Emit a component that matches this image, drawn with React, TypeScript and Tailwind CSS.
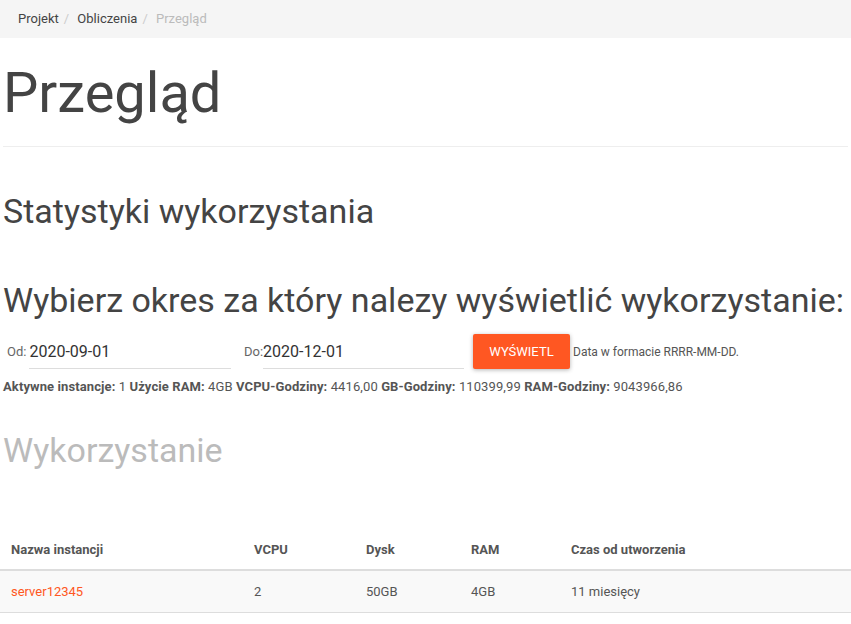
import React from "react";

export default function App() {
  const font = { fontFamily: "Roboto, 'Noto Sans', sans-serif" };
  return (
    <div style={font} className="w-[851px] min-h-[624px] bg-white text-[#444]">
      <div className="h-[38px] bg-[#f5f5f5] flex items-center pl-[18px] text-[13px]">
        <span className="text-[#444]">Projekt</span>
        <span className="px-[5px] text-[#ccc]">/{"\u00a0"}</span>
        <span className="text-[#444]">Obliczenia</span>
        <span className="px-[5px] text-[#ccc]">/{"\u00a0"}</span>
        <span className="text-[#bbb]">Przegląd</span>
      </div>
      <div className="px-[3px]">
        <h1 className="text-[56px] leading-[1.1] mt-[25px] pb-[21px] border-b border-[#eee] font-normal">Przegląd</h1>
        <h2 className="text-[34px] leading-[1.1] mt-[46px] font-normal">Statystyki wykorzystania</h2>
        <h2 className="text-[34px] leading-[1.1] mt-[52px] font-normal whitespace-nowrap">Wybierz okres za który nalezy wyświetlić wykorzystanie:</h2>
        <div className="flex items-start mt-[15px] h-[38px]">
          <div className="flex items-start pl-[4px] w-[229px]">
            <span className="text-[13px] text-[#666] mt-[8px] mr-[3px]">Od:</span>
            <div className="w-[202px] border-b border-[#ddd] h-[35px] pt-[6px] text-[16px] text-[#333]">2020-09-01</div>
          </div>
          <div className="flex items-start pl-[12px] w-[232px]">
            <span className="text-[13px] text-[#666] mt-[8px]">Do:</span>
            <div className="w-[202px] border-b border-[#ddd] h-[35px] pt-[6px] text-[16px] text-[#333]">2020-12-01</div>
          </div>
          <div className="ml-[9px] flex items-start">
            <button className="w-[97px] h-[35px] bg-[#ff5722] text-white text-[13px] rounded-[2px] shadow-[0_1px_4px_rgba(0,0,0,0.3)]">WYŚWIETL</button>
            <span className="text-[12px] text-[#555] ml-[3px] mt-[9px]">Data w formacie RRRR-MM-DD.</span>
          </div>
        </div>
        <div className="text-[13px] text-[#555] mt-[5px] whitespace-nowrap tracking-[0.1px]">
          <b>Aktywne instancje:</b> 1 <b>Użycie RAM:</b> 4GB <b>VCPU-Godziny:</b> 4416,00 <b>GB-Godziny:</b> 110399,99 <b>RAM-Godziny:</b> 9043966,86
        </div>
        <h2 className="text-[34px] leading-[1.1] mt-[35px] font-normal text-[#bbb]">Wykorzystanie</h2>
      </div>
      <table className="w-full mt-[62px] border-collapse">
        <thead>
          <tr className="border-b-2 border-[#ddd]">
            <th className="text-left text-[13px] font-bold text-[#555] pl-[11px] py-[9px] w-[254px]">Nazwa instancji</th>
            <th className="text-left text-[13px] font-bold text-[#555] w-[112px]">VCPU</th>
            <th className="text-left text-[13px] font-bold text-[#555] w-[105px]">Dysk</th>
            <th className="text-left text-[13px] font-bold text-[#555] w-[100px]">RAM</th>
            <th className="text-left text-[13px] font-bold text-[#555]">Czas od utworzenia</th>
          </tr>
        </thead>
        <tbody>
          <tr className="bg-[#f9f9f9] border-b border-[#ddd]">
            <td className="text-[13px] text-[#ff5722] pl-[11px] py-[11px]">server12345</td>
            <td className="text-[13px] text-[#555]">2</td>
            <td className="text-[13px] text-[#555]">50GB</td>
            <td className="text-[13px] text-[#555]">4GB</td>
            <td className="text-[13px] text-[#555]">11 miesięcy</td>
          </tr>
        </tbody>
      </table>
    </div>
  );
}
